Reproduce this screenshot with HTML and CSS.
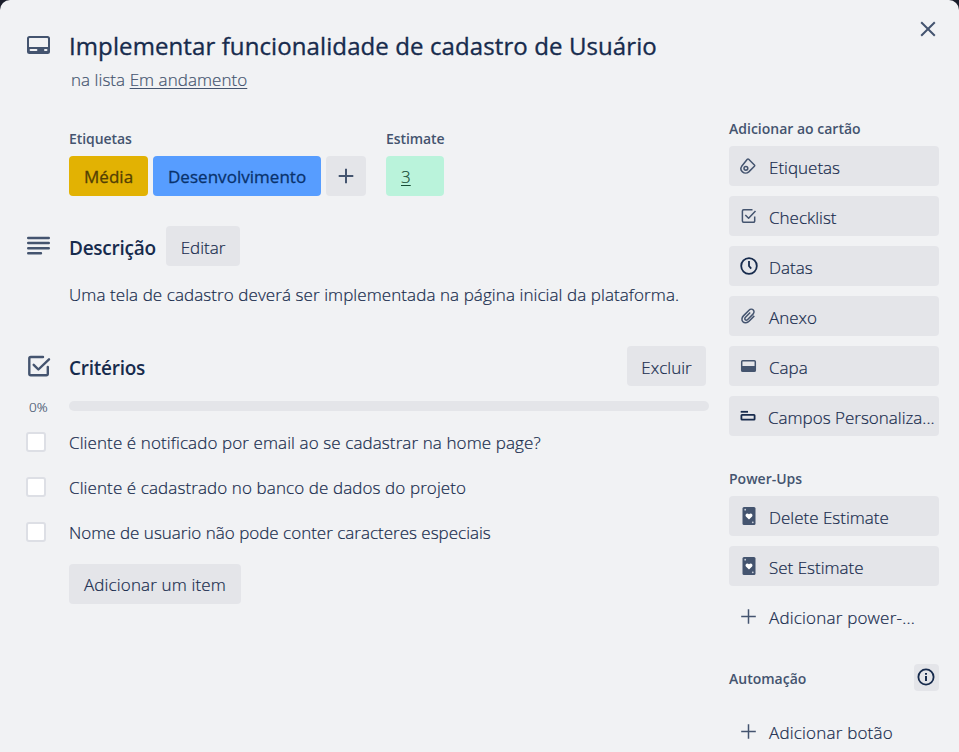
FILE: index.html
```html
<!DOCTYPE html>
<html lang="pt-BR">
<head>
<meta charset="utf-8">
<title>Implementar funcionalidade de cadastro de Usuário</title>
<link rel="stylesheet" href="styles.css">
</head>
<body>
<main class="dialog">
  <button class="close" aria-label="Fechar"><svg width="16" height="16" viewBox="0 0 16 16"><path d="M1.2 1.2l13.6 13.6M14.8 1.2L1.2 14.8" class="line"/></svg></button>
  <header class="header">
    <svg class="header-icon" width="25" height="20" viewBox="0 0 25 20"><path fill="#44546f" fill-rule="evenodd" d="M3.500 1h18A2.500 2.500 0 0 1 24 3.500v13a2.500 2.500 0 0 1-2.500 2.500h-18A2.500 2.500 0 0 1 1 16.500v-13A2.500 2.500 0 0 1 3.500 1zm.2 2a.7.7 0 0 0-.7.7V12h19V3.700a.7.7 0 0 0-.7-.7zM4.500 14a.9.900 0 0 0-.9.9v.2a.9.900 0 0 0 .9.900h6a.9.900 0 0 0 .9-.9v-.2a.9.900 0 0 0-.9-.9zM19 14a1 1 0 0 0-1 1 1 1 0 0 0 1 1h1.500a1 1 0 0 0 1-1 1 1 0 0 0-1-1z"/></svg>
    <h1 class="title">Implementar funcionalidade de cadastro de Usuário</h1>
    <p class="subtitle">na lista <a class="list-link">Em andamento</a></p>
  </header>
  <div class="columns">
    <div class="content">
      <section class="meta">
        <div>
          <h3 class="caption">Etiquetas</h3>
          <div class="tags">
            <span class="tag yellow">Média</span>
            <span class="tag blue">Desenvolvimento</span>
            <button class="tag add" aria-label="Adicionar"><svg width="16" height="16" viewBox="0 0 16 16"><path class="line" d="M8 .7v14.600M.7 8h14.600"/></svg></button>
          </div>
        </div>
        <div>
          <h3 class="caption">Estimate</h3>
          <a class="tag green">3</a>
        </div>
      </section>
      <section class="description">
        <div class="section-head">
          <svg class="section-icon" width="25" height="20" viewBox="0 0 25 20"><path class="rows" d="M2.200 2h20.600M2.200 7h20.600M2.200 12.200h20.600M2.200 17.300h12.800"/></svg>
          <h2>Descrição</h2>
          <button class="btn edit">Editar</button>
        </div>
        <p class="body-text">Uma tela de cadastro deverá ser implementada na página inicial da plataforma.</p>
      </section>
      <section class="checklist">
        <div class="section-head">
          <svg class="section-icon" width="25" height="24" viewBox="0 0 25 24"><path class="check-line" d="M17 3H4.800A1.500 1.500 0 0 0 3.300 4.500v15.300a1.500 1.500 0 0 0 1.500 1.500h15.500a1.500 1.500 0 0 0 1.500-1.500V13M7.700 10.800l4.700 4.700L23 5.300"/></svg>
          <h2>Critérios</h2>
          <button class="btn remove">Excluir</button>
        </div>
        <div class="progress"><span class="percent">0%</span><div class="bar"></div></div>
        <ul class="items">
          <li><i class="box"></i><span>Cliente é notificado por email ao se cadastrar na home page?</span></li>
          <li><i class="box"></i><span>Cliente é cadastrado no banco de dados do projeto</span></li>
          <li class="tight"><i class="box"></i><span>Nome de usuario não pode conter caracteres especiais</span></li>
        </ul>
        <button class="btn add-item">Adicionar um item</button>
      </section>
    </div>
    <aside class="sidebar">
      <h3 class="caption">Adicionar ao cartão</h3>
      <nav class="actions">
        <button class="action"><svg width="20" height="20" viewBox="0 0 20 20"><g class="thin"><path d="M7.300 2.300Q8 1.700 8.700 2.300L14.400 8Q15 8.600 14.400 9.300L8.800 14.900C7 16.500 4.200 16.400 2.500 14.900S.6 10.900 1.700 9.300Z"/><circle cx="5.900" cy="11.300" r="1.900"/></g></svg><span>Etiquetas</span></button>
        <button class="action"><svg width="20" height="20" viewBox="0 0 20 20"><path class="thin" d="M12.500 2.700H3.600a1.200 1.200 0 0 0-1.200 1.200v10.100a1.200 1.200 0 0 0 1.200 1.200h9.900a1.200 1.200 0 0 0 1.200-1.200v-4.600M5.300 7.900l3.300 3.400L15.500 4"/></svg><span>Checklist</span></button>
        <button class="action"><svg width="20" height="20" viewBox="0 0 20 20"><g class="dark"><circle cx="9" cy="9" r="7.800"/><path d="M9 4v5l2.200 2.600"/></g></svg><span>Datas</span></button>
        <button class="action"><svg width="20" height="20" viewBox="0 0 20 20"><path class="thin" d="M14.300 8.900l-5.300 5.400c-1.700 1.700-4.600 2-6.100.5s-1.200-4.200.5-5.900L9 3.300c1.200-1.200 3.200-1.400 4.300-.3s.9 2.900-.3 4.100l-5.300 5.400c-.8.800-1.900.9-2.500.3s-.5-1.700.3-2.500l4.700-4.900"/></svg><span>Anexo</span></button>
        <button class="action"><svg width="20" height="20" viewBox="0 0 20 20"><rect class="thin" x="1.700" y="3.700" width="13.600" height="10.600" rx="1"/><path fill="#44546f" d="M1.500 9h14v5.500h-14z"/></svg><span>Capa</span></button>
        <button class="action fields"><svg width="20" height="20" viewBox="0 0 20 20"><g class="dark"><path d="M.7 4.800h7.300"/><rect x="1.400" y="7.800" width="13.200" height="4.900" rx=".6"/></g></svg><span>Campos Personaliza...</span></button>
      </nav>
      <h3 class="caption powerups">Power-Ups</h3>
      <nav class="actions">
        <button class="action"><svg width="20" height="20" viewBox="0 0 20 20"><use href="#card"/></svg><span>Delete Estimate</span></button>
        <button class="action"><svg width="20" height="20" viewBox="0 0 20 20"><g id="card"><rect x="2.500" y="0" width="13" height="18" rx="1.500" fill="#44546f"/><path fill="#fff" d="M9 12.600L5.900 9.500C4.500 7.700 7 5 9 7.200 11 5 13.500 7.700 12.100 9.500z"/><circle cx="5.200" cy="2.700" r=".9" fill="#ccd2dc"/><circle cx="12.800" cy="15.300" r=".9" fill="#ccd2dc"/></g></svg><span>Set Estimate</span></button>
        <button class="action plain"><svg width="20" height="20" viewBox="0 0 20 20"><path class="plus" d="M8.500 2.200v14.600M1.200 9.500h14.600"/></svg><span>Adicionar power-...</span></button>
      </nav>
      <div class="automation"><h3 class="caption">Automação</h3><button class="info" aria-label="Informações"><svg width="19" height="19" viewBox="0 0 19 19"><circle class="dark" cx="9" cy="9" r="7.600"/><path fill="#172b4d" d="M8 8h2v5H8zM8 5h2v1.800H8z"/></svg></button></div>
      <button class="action plain"><svg width="20" height="20" viewBox="0 0 20 20"><path class="plus" d="M8.500 2.200v14.600M1.200 9.500h14.600"/></svg><span>Adicionar botão</span></button>
    </aside>
  </div>
</main>
</body>
</html>
```
FILE: styles.css
```css
* { box-sizing: border-box; }
body {
  margin: 0;
  background: #1b1e2b;
  color: #172b4d;
  font: 300 17px/24px "Open Sans", "Noto Sans", sans-serif;
  -webkit-text-stroke-width: 0.2px;
}
h1, h2, h3, p, ul { margin: 0; padding: 0; }
button {
  border: 0;
  padding: 0;
  background: none;
  font: inherit;
  color: inherit;
}
svg { display: block; flex: none; }
.line { fill: none; stroke: #44546f; stroke-width: 2; }
.rows { fill: none; stroke: #44546f; stroke-width: 2.4; stroke-linecap: round; }
.check-line { fill: none; stroke: #44546f; stroke-width: 2.4; stroke-linecap: round; stroke-linejoin: round; }
.thin { fill: none; stroke: #44546f; stroke-width: 1.5; stroke-linejoin: round; }
.dark { fill: none; stroke: #172b4d; stroke-width: 1.8; }
.plus { fill: none; stroke: #44546f; stroke-width: 1.5; }

.dialog {
  position: relative;
  height: 752px;
  overflow: hidden;
  background: #f1f2f4;
  border-radius: 10px 10px 0 0;
}
.close { position: absolute; right: 23px; top: 21px; }
.header {
  display: grid;
  grid-template-columns: 43px 1fr;
  padding: 30px 0 0 26px;
  height: 119px;
  grid-template-rows: 34px 30px;
}
.header-icon { margin-top: 5px; }
.title {
  font-size: 24px;
  line-height: 32px;
  font-weight: 400;
  letter-spacing: 0.1px;
  -webkit-text-stroke-width: 0.35px;
  white-space: nowrap;
}
.subtitle { grid-column: 2; padding-left: 2px; line-height: 32px; letter-spacing: 0.05px; color: #44546f; white-space: nowrap; }
.list-link { text-decoration: underline; text-underline-offset: 2px; text-decoration-thickness: 1px; }
.columns { display: grid; grid-template-columns: 640px 210px; column-gap: 20px; padding-left: 69px; }
.content { padding-top: 10px; }
.caption { font-size: 14px; line-height: 20px; font-weight: 600; color: #44546f; -webkit-text-stroke-width: 0; white-space: nowrap; }

.meta { display: flex; gap: 20px; }
.meta .caption { margin-bottom: 7px; letter-spacing: -0.08px; }
.tags { display: flex; gap: 5px; }
.tag {
  display: flex;
  align-items: center;
  height: 40px;
  padding: 2px 0 0 15px;
  border-radius: 4px;
  font-weight: 400;
  letter-spacing: 0.03px;
  -webkit-text-stroke-width: 0.3px;
  white-space: nowrap;
}
.yellow { width: 79px; background: #e2b203; color: #533f04; }
.blue { width: 168px; background: #579dff; color: #09326c; }
.add { width: 40px; padding: 0 0 0 12px; background: #e4e5e9; }
.green {
  width: 58px;
  background: #baf3db;
  color: #164b35;
  font-weight: 300;
  -webkit-text-stroke-width: 0.2px;
  text-decoration: underline;
  text-underline-offset: 2px;
  text-decoration-thickness: 1px;
}

.description { margin-top: 30px; }
.section-head { display: flex; align-items: center; height: 40px; margin-left: -43px; }
.section-icon { width: 25px; margin-right: 18px; }
h2 { font-size: 19px; font-weight: 600; letter-spacing: -0.25px; -webkit-text-stroke-width: 0; white-space: nowrap; padding-top: 3px; }
.btn {
  height: 40px;
  padding: 3px 0 0;
  border-radius: 4px;
  background: #e4e5e9;
  white-space: nowrap;
}
.edit { width: 74px; margin-left: auto; margin-right: 469px; }
.remove { width: 79px; margin-left: auto; margin-right: 3px; }
.body-text { margin-top: 17px; letter-spacing: 0.08px; white-space: nowrap; }
.checklist { margin-top: 39px; }
.progress { display: flex; align-items: center; height: 10px; margin: 15px 0 9px -40px; }
.percent { width: 40px; font-size: 13.500px; color: #44546f; font-weight: 300; padding-top: 2px; }
.bar { flex: 1; height: 10px; border-radius: 5px; background: #e4e5e9; }
.items { list-style: none; margin-left: -43px; letter-spacing: 0.1px; }
.items li { display: flex; align-items: center; height: 45px; gap: 23px; white-space: nowrap; }
.items .tight { letter-spacing: 0; }
.box { width: 20px; height: 20px; border: 2px solid #dddfe5; border-radius: 3px; background: #fff; margin-bottom: 1px; }
.add-item { width: 172px; margin-top: 9px; padding-top: 2px; letter-spacing: 0.15px; }

.actions { display: grid; row-gap: 10px; margin-top: 7px; }
.action {
  display: flex;
  align-items: center;
  width: 210px;
  height: 40px;
  padding-left: 11px;
  gap: 9px;
  border-radius: 4px;
  background: #e4e5e9;
  white-space: nowrap;
}
.action svg { margin-top: 2px; }
.action span { padding-top: 3px; }
.fields { gap: 8px; }
.action.plain { background: none; letter-spacing: 0.2px; }
.powerups { margin-top: 33px; }
.automation { display: flex; justify-content: space-between; align-items: center; height: 27px; margin: 28px 0 20px; }
.automation .caption { padding-top: 2px; }
.info { display: grid; place-items: center; width: 25px; height: 27px; border-radius: 4px; background: #e4e5e9; }
```
